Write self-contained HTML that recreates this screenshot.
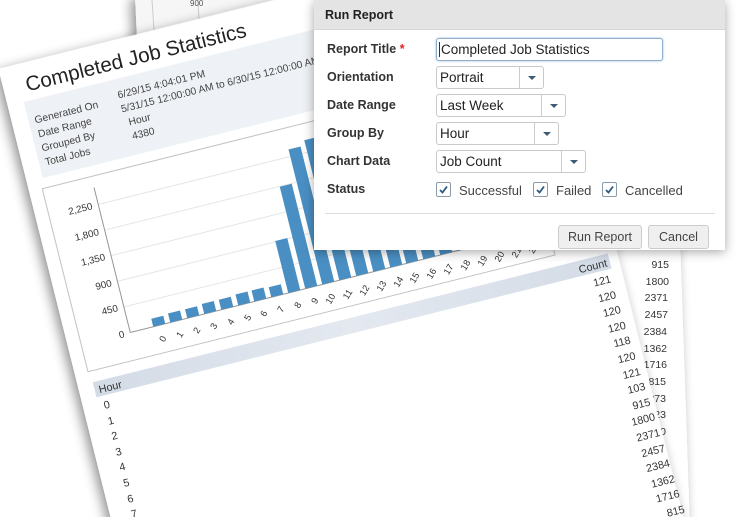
<!DOCTYPE html>
<html><head><meta charset="utf-8"><style>
html,body{margin:0;padding:0;background:#fff;}
body{width:739px;height:517px;position:relative;overflow:hidden;font-family:"Liberation Sans",sans-serif;}
svg{position:absolute;left:0;top:0;}
.dlg{position:absolute;left:314px;top:0;width:411px;height:250px;background:#fff;box-shadow:0 2px 10px rgba(0,0,0,.35);}
.hd{position:absolute;left:0;top:0;width:411px;height:29px;background:#e4e4e4;border-bottom:1px solid #d6d6d6;}
.hd span{position:absolute;left:11px;top:8px;font-weight:bold;font-size:12.5px;color:#222;}
.lb{position:absolute;left:13px;font-weight:bold;font-size:12.5px;color:#333;}
.in{position:absolute;left:122px;height:21px;border:1px solid #c9c9c9;border-radius:3px;background:#fff;box-sizing:border-box;font-size:13.5px;color:#222;}
.in span{position:absolute;left:3px;top:3px;}
.in i{position:absolute;top:0;bottom:0;border-left:1px solid #ccc;width:0;}
.in b{position:absolute;top:9px;width:0;height:0;border-left:4px solid transparent;border-right:4px solid transparent;border-top:4px solid #3d5a75;}
.cb{position:absolute;top:182px;width:15px;height:15px;border:1px solid #8a9bab;border-radius:2px;box-sizing:border-box;background:#fff;}
.ct{position:absolute;top:183px;font-size:13px;color:#444;}
.bt{position:absolute;top:225px;height:24px;border:1px solid #ccc;border-radius:3px;background:#efefef;box-sizing:border-box;font-size:12.5px;color:#444;text-align:center;line-height:22px;}
</style></head><body>
<svg width="739" height="517" viewBox="0 0 739 517" xmlns="http://www.w3.org/2000/svg">
<defs>
<filter id="sh" x="-20%" y="-20%" width="140%" height="140%"><feGaussianBlur in="SourceAlpha" stdDeviation="6"/><feOffset dx="-4" dy="3"/><feComponentTransfer><feFuncA type="linear" slope="0.45"/></feComponentTransfer><feMerge><feMergeNode/><feMergeNode in="SourceGraphic"/></feMerge></filter>
<linearGradient id="hb" x1="0" x2="1"><stop offset="0" stop-color="#d3dbe6"/><stop offset="0.5" stop-color="#e4e9f0"/><stop offset="1" stop-color="#d3dbe6"/></linearGradient>
</defs>
<g filter="url(#sh)">
<polygon points="135,-5 320,-5 318,30 138,60" fill="#f6f6f6"/>
</g>
<line x1="152" y1="0" x2="156" y2="60" stroke="#ccc"/>
<line x1="198" y1="0" x2="200" y2="40" stroke="#ccc"/>
<text x="190" y="6" font-size="8" fill="#555" font-family="Liberation Sans">900</text>
<g filter="url(#sh)">
<polygon points="560,240 680,240 690,530 600,530" fill="#fff"/>
</g>
<g font-size="10.5" fill="#333" text-anchor="end" font-family="Liberation Sans">
<text x="669" y="268">915</text><text x="669" y="285">1800</text><text x="668" y="301">2371</text><text x="668" y="318">2457</text><text x="667" y="335">2384</text><text x="667" y="352">1362</text><text x="667" y="368">1716</text><text x="666" y="385">815</text><text x="666" y="402">273</text><text x="666" y="418">223</text><text x="666" y="435">150</text><text x="666" y="452">130</text>
</g>
<g transform="matrix(1,-0.25,0.25,1,0,75)" font-family="Liberation Sans">
<rect x="0" y="-6" width="539" height="640" fill="#fff" filter="url(#sh)"/>
<text x="22" y="22" font-size="20" fill="#222">Completed Job Statistics</text>
<rect x="16" y="31" width="510" height="76" fill="#eef1f5"/>
<g font-size="10" fill="#444">
<text x="22" y="54">Generated On</text><text x="22" y="68">Date Range</text><text x="22" y="82">Grouped By</text><text x="22" y="96">Total Jobs</text>
<text x="106" y="50">6/29/15 4:04:01 PM</text><text x="106" y="64">5/31/15 12:00:00 AM to 6/30/15 12:00:00 AM</text><text x="110" y="78">Hour</text><text x="110" y="92">4380</text>
</g>
<rect x="13" y="117" width="467" height="183" fill="#fff" stroke="#c4c4c4"/>
<g stroke="#e6e6e6"><line x1="62" y1="247.4" x2="478" y2="247.4"/><line x1="62" y1="221.8" x2="478" y2="221.8"/><line x1="62" y1="196.2" x2="478" y2="196.2"/><line x1="62" y1="170.6" x2="478" y2="170.6"/><line x1="62" y1="145" x2="478" y2="145"/></g>
<line x1="62" y1="128" x2="62" y2="273" stroke="#999"/>
<line x1="62" y1="273" x2="478" y2="273" stroke="#999"/>
<g font-size="9.5" fill="#333" text-anchor="end">
<text x="56" y="276">0</text><text x="56" y="250">450</text><text x="56" y="225">900</text><text x="56" y="199">1,350</text><text x="56" y="174">1,800</text><text x="56" y="148">2,250</text>
</g>
<g fill="#4a8fc3">
<rect x="85" y="265" width="12" height="8"/><rect x="102" y="264" width="12" height="9"/><rect x="119" y="264" width="12" height="9"/><rect x="136" y="263" width="12" height="10"/><rect x="153" y="263" width="12" height="10"/><rect x="170" y="262" width="12" height="11"/><rect x="186" y="262" width="12" height="11"/><rect x="203" y="263" width="12" height="10"/>
<rect x="220" y="221" width="12" height="52"/><rect x="237" y="171" width="12" height="102"/><rect x="254" y="138" width="12" height="135"/><rect x="271" y="133" width="12" height="140"/><rect x="288" y="137" width="12" height="136"/><rect x="305" y="196" width="12" height="77"/><rect x="322" y="175" width="12" height="98"/><rect x="338" y="227" width="12" height="46"/><rect x="355" y="257" width="12" height="16"/><rect x="372" y="260" width="12" height="13"/><rect x="389" y="264" width="12" height="9"/><rect x="406" y="266" width="12" height="7"/><rect x="423" y="266" width="12" height="7"/><rect x="440" y="266" width="12" height="7"/><rect x="457" y="266" width="12" height="7"/>
</g>
<g font-size="9" fill="#333" text-anchor="end">
<text transform="translate(95,287) rotate(-45)">0</text><text transform="translate(112,287) rotate(-45)">1</text><text transform="translate(129,287) rotate(-45)">2</text><text transform="translate(146,287) rotate(-45)">3</text><text transform="translate(163,287) rotate(-45)">4</text><text transform="translate(180,287) rotate(-45)">5</text><text transform="translate(196,287) rotate(-45)">6</text><text transform="translate(213,287) rotate(-45)">7</text><text transform="translate(230,287) rotate(-45)">8</text><text transform="translate(247,287) rotate(-45)">9</text><text transform="translate(264,287) rotate(-45)">10</text><text transform="translate(281,287) rotate(-45)">11</text><text transform="translate(298,287) rotate(-45)">12</text><text transform="translate(315,287) rotate(-45)">13</text><text transform="translate(332,287) rotate(-45)">14</text><text transform="translate(348,287) rotate(-45)">15</text><text transform="translate(365,287) rotate(-45)">16</text><text transform="translate(382,287) rotate(-45)">17</text><text transform="translate(399,287) rotate(-45)">18</text><text transform="translate(416,287) rotate(-45)">19</text><text transform="translate(433,287) rotate(-45)">20</text><text transform="translate(450,287) rotate(-45)">21</text><text transform="translate(467,287) rotate(-45)">22</text><text transform="translate(484,287) rotate(-45)">23</text>
</g>
<rect x="15" y="311" width="515" height="15" fill="url(#hb)"/>
<text x="19" y="323" font-size="10.5" fill="#333">Hour</text>
<text x="527" y="323" font-size="10.5" fill="#333" text-anchor="end">Count</text>
<g font-size="10.5" fill="#333">
<text x="20" y="339">0</text><text x="20" y="355">1</text><text x="20" y="370">2</text><text x="20" y="386">3</text><text x="20" y="401">4</text><text x="20" y="417">5</text><text x="20" y="433">6</text><text x="20" y="448">7</text>
</g>
<g font-size="10.5" fill="#333" text-anchor="end">
<text x="527" y="339">121</text><text x="528" y="355">120</text><text x="529" y="370">120</text><text x="530" y="386">120</text><text x="531" y="401">118</text><text x="532" y="417">120</text><text x="533" y="433">121</text><text x="534" y="448">103</text><text x="535" y="464">915</text><text x="536" y="479">1800</text><text x="537" y="495">2371</text><text x="538" y="511">2457</text><text x="539" y="526">2384</text><text x="540" y="542">1362</text><text x="541" y="557">1716</text><text x="542" y="573">815</text>
</g>
</g>
</svg>
<div class="dlg">
<div class="hd"><span>Run Report</span></div>
<div class="lb" style="top:42px">Report Title <span style="color:#d22">*</span></div>
<div class="lb" style="top:70px">Orientation</div>
<div class="lb" style="top:98px">Date Range</div>
<div class="lb" style="top:126px">Group By</div>
<div class="lb" style="top:154px">Chart Data</div>
<div class="lb" style="top:182px">Status</div>
<div class="in" style="top:38px;width:227px;height:23px;border-color:#8fb0cc;box-shadow:0 0 2px #9bbbd6;"><span style="border-left:1px solid #333;padding-left:1px;left:2px;">Completed Job Statistics</span></div>
<div class="in" style="top:66px;width:108px;height:23px;"><span>Portrait</span><i style="left:82px"></i><b style="left:91px"></b></div>
<div class="in" style="top:94px;width:130px;height:23px;"><span>Last Week</span><i style="left:104px"></i><b style="left:113px"></b></div>
<div class="in" style="top:122px;width:123px;height:23px;"><span>Hour</span><i style="left:97px"></i><b style="left:106px"></b></div>
<div class="in" style="top:150px;width:150px;height:23px;"><span>Job Count</span><i style="left:124px"></i><b style="left:133px"></b></div>
<div class="cb" style="left:122px"><svg width="13" height="13" style="position:absolute;left:0;top:0"><path d="M3 7 L5.5 9.5 L10 3.5" fill="none" stroke="#2b5a85" stroke-width="1.8"/></svg></div>
<div class="ct" style="left:145px">Successful</div>
<div class="cb" style="left:219px"><svg width="13" height="13" style="position:absolute;left:0;top:0"><path d="M3 7 L5.5 9.5 L10 3.5" fill="none" stroke="#2b5a85" stroke-width="1.8"/></svg></div>
<div class="ct" style="left:242px">Failed</div>
<div class="cb" style="left:288px"><svg width="13" height="13" style="position:absolute;left:0;top:0"><path d="M3 7 L5.5 9.5 L10 3.5" fill="none" stroke="#2b5a85" stroke-width="1.8"/></svg></div>
<div class="ct" style="left:311px">Cancelled</div>
<div style="position:absolute;left:11px;top:213px;width:390px;height:1px;background:#ddd"></div>
<div class="bt" style="left:244px;width:84px">Run Report</div>
<div class="bt" style="left:334px;width:61px">Cancel</div>
</div>
</body></html>
